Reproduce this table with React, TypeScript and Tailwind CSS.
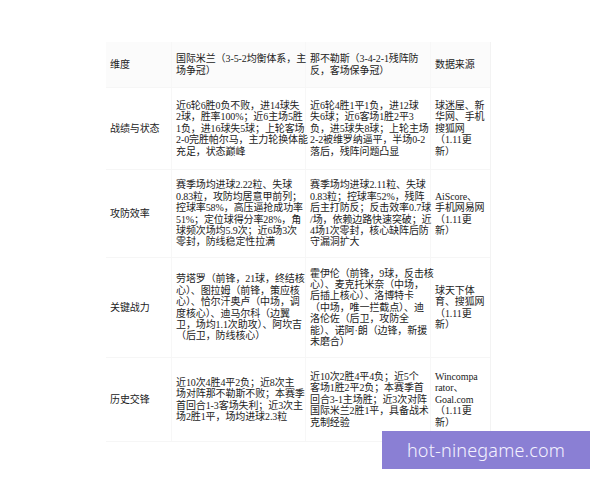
const rows: { label: string; home: string[]; away: string[]; source: string[]; h: string }[] = [
  {
    label: "维度",
    home: ["国际米兰（3-5-2均衡体系，主", "场争冠）"],
    away: ["那不勒斯（3-4-2-1残阵防", "反，客场保争冠）"],
    source: ["数据来源"],
    h: "h-[46px] bg-[#fbfbfb]",
  },
  {
    label: "战绩与状态",
    home: [
      "近6轮6胜0负不败，进14球失",
      "2球，胜率100%；近6主场5胜",
      "1负，进16球失5球；上轮客场",
      "2-0完胜帕尔马，主力轮换体能",
      "充足，状态巅峰",
    ],
    away: [
      "近6轮4胜1平1负，进12球",
      "失6球；近6客场1胜2平3",
      "负，进5球失8球；上轮主场",
      "2-2被维罗纳逼平，半场0-2",
      "落后，残阵问题凸显",
    ],
    source: ["球迷屋、新", "华网、手机", "搜狐网", "（1.11更", "新）"],
    h: "h-[82px]",
  },
  {
    label: "攻防效率",
    home: [
      "赛季场均进球2.22粒、失球",
      "0.83粒，攻防均居意甲前列；",
      "控球率58%，高压逼抢成功率",
      "51%；定位球得分率28%，角",
      "球频次场均5.9次；近6场3次",
      "零封，防线稳定性拉满",
    ],
    away: [
      "赛季场均进球2.11粒、失球",
      "0.83粒；控球率52%，残阵",
      "后主打防反；反击效率0.7球",
      "/场，依赖边路快速突破；近",
      "4场1次零封，核心缺阵后防",
      "守漏洞扩大",
    ],
    source: ["AiScore、", "手机网易网", "（1.11更", "新）"],
    h: "h-[88px]",
  },
  {
    label: "关键战力",
    home: [
      "劳塔罗（前锋，21球，终结核",
      "心）、图拉姆（前锋，策应核",
      "心）、恰尔汗奥卢（中场，调",
      "度核心）、迪马尔科（边翼",
      "卫，场均1.1次助攻）、阿坎吉",
      "（后卫，防线核心）",
    ],
    away: [
      "霍伊伦（前锋，9球，反击核",
      "心）、麦克托米奈（中场，",
      "后插上核心）、洛博特卡",
      "（中场，唯一拦截点）、迪",
      "洛伦佐（后卫，攻防全",
      "能）、诺阿·朗（边锋，新援",
      "未磨合）",
    ],
    source: ["球天下体", "育、搜狐网", "（1.11更", "新）"],
    h: "h-[100px]",
  },
  {
    label: "历史交锋",
    home: [
      "近10次4胜4平2负；近8次主",
      "场对阵那不勒斯不败；本赛季",
      "首回合1-3客场失利；近3次主",
      "场2胜1平，场均进球2.3粒",
    ],
    away: [
      "近10次2胜4平4负；近5个",
      "客场1胜2平2负；本赛季首",
      "回合3-1主场胜；近3次对阵",
      "国际米兰2胜1平，具备战术",
      "克制经验",
    ],
    source: ["Wincompa", "rator、", "Goal.com", "（1.11更", "新）"],
    h: "h-[84px]",
  },
];

function Cell({ lines, last }: { lines: string[]; last?: boolean }) {
  return (
    <div className={`flex flex-col justify-center pl-[4px] ${last ? "" : "border-r border-[#f7f7f7]"}`}>
      {lines.map((l, i) => (
        <span key={i} className="whitespace-nowrap leading-[11.4px]">
          {l}
        </span>
      ))}
    </div>
  );
}

export default function App() {
  return (
    <div className="relative w-[600px] h-[480px] bg-white overflow-hidden">
      <div className="pt-[42px] pl-[106px]">
        <div
          className="w-[385px] text-[10px] tracking-[-0.1px] text-[#222] border-r border-[#f3f3f3]"
          style={{ fontFamily: '"Liberation Serif", "Noto Sans CJK SC", serif' }}
        >
          {rows.map((r) => (
            <div
              key={r.label}
              className={`grid grid-cols-[66px_134px_125px_60px] border-b border-[#f6f6f6] ${r.h}`}
            >
              <Cell lines={[r.label]} />
              <Cell lines={r.home} />
              <Cell lines={r.away} />
              <Cell lines={r.source} last />
            </div>
          ))}
        </div>
      </div>

      {/* watermark */}
      <div className="absolute left-[382px] top-[431px] w-[208px] h-[38px] bg-[#8a7fd4] flex items-center justify-center">
        <span
          className="text-[18px] font-light text-[#f4f2ff] tracking-[0.2px]"
          style={{ fontFamily: '"Noto Sans", "Open Sans", sans-serif' }}
        >
          hot-ninegame.com
        </span>
      </div>
    </div>
  );
}
